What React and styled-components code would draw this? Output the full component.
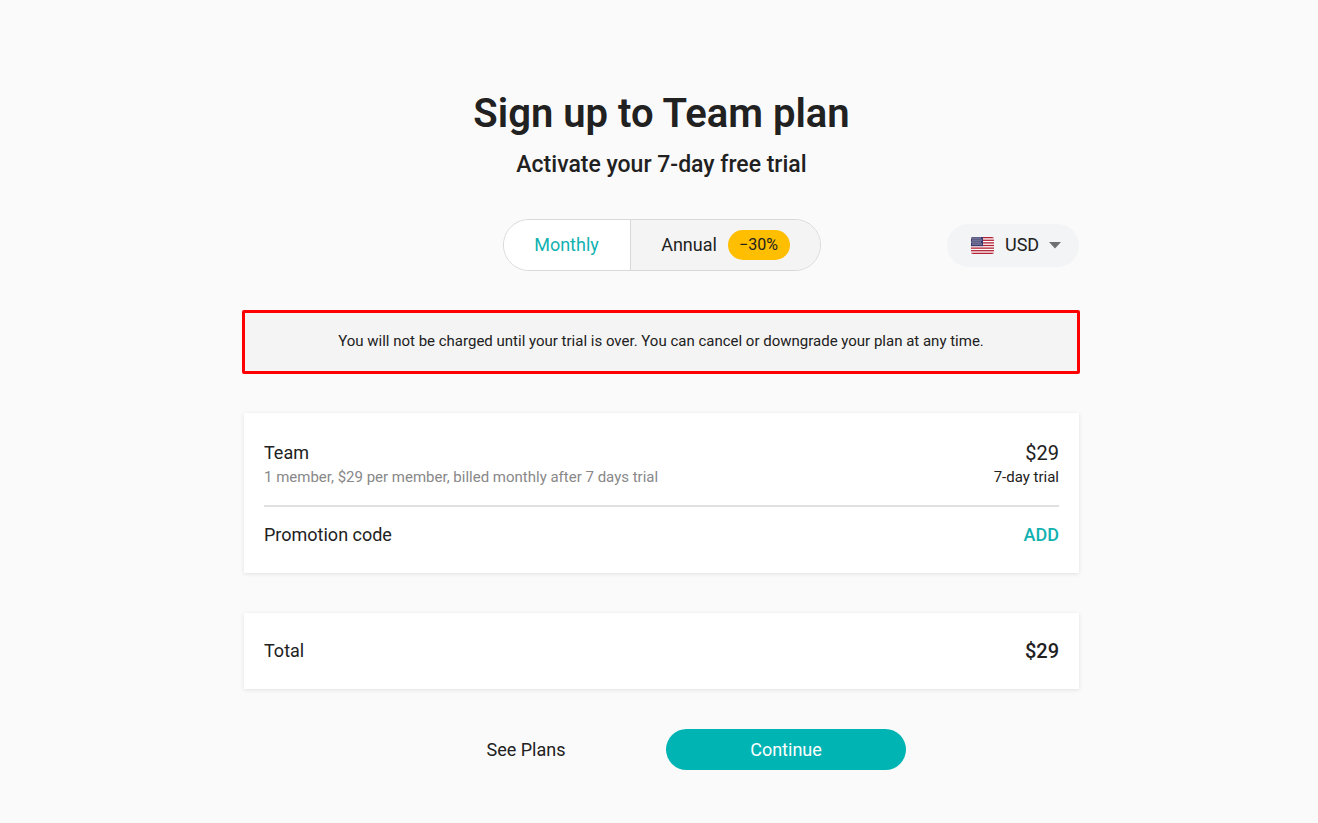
import React, { useState } from "react";
import styled, { createGlobalStyle } from "styled-components";

const GlobalStyle = createGlobalStyle`
  *, *::before, *::after { box-sizing: border-box; }
  body {
    margin: 0;
    background: #fafafa;
    color: #212121;
    font-family: Roboto, "Liberation Sans", sans-serif;
    font-size: 18px;
    line-height: 24px;
  }
  button, select, input { font: inherit; color: inherit; letter-spacing: inherit; }
`;

const Page = styled.main`
  display: flex;
  justify-content: center;
  padding: 89px 16px 52px 21px;
`;

const Content = styled.div`
  width: 100%;
  max-width: 835px;
`;

const Title = styled.h1`
  margin: 0;
  text-align: center;
  font-size: 40px;
  line-height: 50px;
  font-weight: 600;
`;

const Subtitle = styled.h2`
  margin: 10px 0 0;
  text-align: center;
  font-size: 23px;
  line-height: 32px;
  font-weight: 500;
`;

const Options = styled.div`
  display: grid;
  grid-template-columns: 1fr auto 1fr;
  align-items: center;
  margin-top: 38px;
`;

const Toggle = styled.fieldset`
  grid-column: 2;
  display: flex;
  height: 52px;
  margin: 0;
  padding: 0;
  overflow: hidden;
  border: 1px solid #d9d9d9;
  border-radius: 26px;
`;

const Period = styled.label`
  position: relative;
  display: flex;
  align-items: center;
  gap: 10px;
  padding: 0 30px;
  cursor: pointer;
  background: ${(p) => (p.$active ? "#ffffff" : "#f4f4f4")};
  color: ${(p) => (p.$active ? "#11b1b1" : "#212121")};

  & + & { border-left: 1px solid #d9d9d9; }
`;

const PeriodInput = styled.input`
  position: absolute;
  inset: 0;
  margin: 0;
  opacity: 0;
  cursor: pointer;
`;

const PeriodName = styled.span`
  min-width: ${(p) => p.$width}px;
  text-align: center;
`;

const Discount = styled.span`
  width: 62px;
  text-align: center;
  border-radius: 15px;
  background: #ffbe00;
  color: #212121;
  font-size: 16px;
  line-height: 30px;
`;

const Currency = styled.div`
  position: relative;
  justify-self: end;
  display: flex;
  align-items: center;
  height: 43px;
  border-radius: 22px;
  background: #f2f4f6;
`;

const CurrencySelect = styled.select`
  width: 132px;
  height: 43px;
  padding: 0 40px 0 58px;
  border: 0;
  border-radius: 22px;
  background: transparent;
  appearance: none;
  cursor: pointer;
`;

const FlagIcon = styled.svg`
  position: absolute;
  left: 24px;
  pointer-events: none;
`;

const CaretIcon = styled.svg`
  position: absolute;
  right: 18px;
  pointer-events: none;
`;

const Notice = styled.p`
  margin: 39px -1px 0 -2px;
  padding: 16px 16px 18px;
  border: 3px solid #ff0000;
  border-radius: 2px;
  background: #f4f4f4;
  text-align: center;
  font-size: 15px;
`;

const Card = styled.section`
  margin-top: ${(p) => p.$gap || 40}px;
  padding: ${(p) => p.$pad}px 20px 26px;
  background: #ffffff;
  box-shadow: 0 1px 4px rgba(0, 0, 0, 0.1);
`;

const Row = styled.div`
  display: flex;
  justify-content: space-between;
  align-items: center;
  gap: 16px;
  min-height: 24px;
`;

const Divider = styled.hr`
  height: 2px;
  margin: 16px 0;
  border: 0;
  background: #e0e0e0;
`;

const Detail = styled.span`
  font-size: 15px;
  color: ${(p) => (p.$muted ? "#888888" : "#212121")};
`;

const Price = styled.span`
  font-size: 20px;
  font-weight: ${(p) => (p.$strong ? 500 : 400)};
`;

const AddButton = styled.button`
  padding: 0;
  border: 0;
  background: none;
  color: #11b1b1;
  font-weight: 500;
  cursor: pointer;
`;

const Actions = styled.div`
  display: flex;
  justify-content: center;
  align-items: center;
  margin-top: 40px;
  padding-left: 29px;
  gap: 60px;
`;

const PlansLink = styled.a`
  width: 160px;
  text-align: center;
  color: inherit;
  text-decoration: none;
`;

const ContinueButton = styled.button`
  width: 240px;
  height: 41px;
  padding: 0;
  border: 0;
  border-radius: 21px;
  background: #00b4b4;
  color: #ffffff;
  cursor: pointer;
`;

function UsFlag() {
  const stripes = [0, 1, 2, 3, 4, 5, 6];
  const stars = [0, 1, 2, 3].flatMap((r) =>
    [0, 1, 2, 3, 4].map((c) => [c * 2 + 1 + (r % 2), r * 2 + 1])
  );
  return (
    <FlagIcon width="23" height="17" viewBox="0 0 23 17" aria-hidden="true">
      <clipPath id="flag-shape"><rect width="23" height="17" rx="2" /></clipPath>
      <g clipPath="url(#flag-shape)">
        <rect width="23" height="17" fill="#ffffff" />
        {stripes.map((i) => (
          <rect key={i} y={i * 2.615} width="23" height="1.31" fill="#b22234" />
        ))}
        <rect width="12" height="9.15" fill="#3c3b6e" />
        {stars.map(([x, y]) => (
          <circle key={`${x}-${y}`} cx={x} cy={y} r="0.6" fill="#ffffff" />
        ))}
      </g>
    </FlagIcon>
  );
}

export default function App() {
  const [period, setPeriod] = useState("monthly");
  return (
    <>
      <GlobalStyle />
      <Page>
        <Content>
          <Title>Sign up to Team plan</Title>
          <Subtitle>Activate your 7-day free trial</Subtitle>
          <Options>
            <Toggle aria-label="Billing period">
              <Period $active={period === "monthly"}>
                <PeriodInput type="radio" name="period" checked={period === "monthly"} onChange={() => setPeriod("monthly")} />
                <PeriodName $width={66}>Monthly</PeriodName>
              </Period>
              <Period $active={period === "annual"}>
                <PeriodInput type="radio" name="period" checked={period === "annual"} onChange={() => setPeriod("annual")} />
                <PeriodName $width={57}>Annual</PeriodName>
                <Discount>−30%</Discount>
              </Period>
            </Toggle>
            <Currency>
              <UsFlag />
              <CurrencySelect aria-label="Currency" defaultValue="USD">
                <option>USD</option>
              </CurrencySelect>
              <CaretIcon width="12" height="7" viewBox="0 0 12 7" aria-hidden="true">
                <path d="M0 0h12L6 6.5z" fill="#707070" />
              </CaretIcon>
            </Currency>
          </Options>
          <Notice>
            You will not be charged until your trial is over. You can cancel or downgrade your plan at any time.
          </Notice>
          <Card $gap={39} $pad={28}>
            <Row>
              <span>Team</span>
              <Price>$29</Price>
            </Row>
            <Row>
              <Detail $muted>1 member, $29 per member, billed monthly after 7 days trial</Detail>
              <Detail>7-day trial</Detail>
            </Row>
            <Divider />
            <Row>
              <span>Promotion code</span>
              <AddButton type="button">ADD</AddButton>
            </Row>
          </Card>
          <Card $pad={26}>
            <Row>
              <span>Total</span>
              <Price $strong>$29</Price>
            </Row>
          </Card>
          <Actions>
            <PlansLink href="#plans">See Plans</PlansLink>
            <ContinueButton type="button">Continue</ContinueButton>
          </Actions>
        </Content>
      </Page>
    </>
  );
}
